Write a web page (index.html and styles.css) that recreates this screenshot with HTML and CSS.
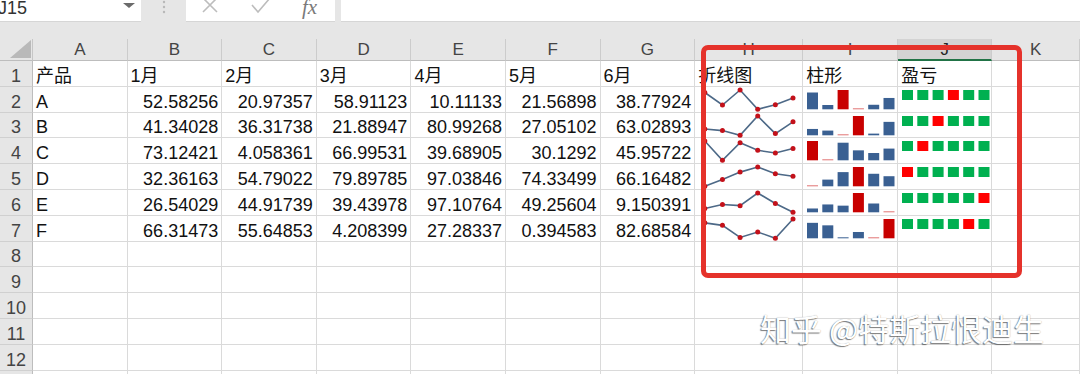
FILE: index.html
```html
<!DOCTYPE html>
<html lang="zh-CN">

<head>
    <meta charset="UTF-8">
    <meta name="viewport" content="width=device-width, initial-scale=1.0">
    <title>迷你图</title>
    <link rel="stylesheet" href="styles.css">
</head>

<body>
    <div class="formula-bar">
        <div class="name-box">
            <span class="name">J15</span>
            <span class="drop"></span>
        </div>
        <div class="grip">
            <svg width="4" height="14" viewBox="0 0 4 14"><circle cx="2" cy="2" r="1.2" /><circle cx="2" cy="7" r="1.2" /><circle cx="2" cy="12" r="1.2" /></svg>
        </div>
        <div class="func-box">
            <svg class="icon" width="18" height="18" viewBox="0 0 18 18">
                <path d="M2 -2 L16 12 M16 -2 L2 12" />
            </svg>
            <svg class="icon" width="22" height="18" viewBox="0 0 22 18">
                <path d="M2 5 L8 12 L20 -2" />
            </svg>
            <span class="fx">fx</span>
        </div>
        <div class="input-box"></div>
    </div>

    <div class="sheet">
        <div class="corner"><svg width="22" height="18" viewBox="0 0 22 18"><path d="M21 0 L21 18 L0 18 Z" /></svg></div>
        <div class="col-head">A</div>
        <div class="col-head">B</div>
        <div class="col-head">C</div>
        <div class="col-head">D</div>
        <div class="col-head">E</div>
        <div class="col-head">F</div>
        <div class="col-head">G</div>
        <div class="col-head">H</div>
        <div class="col-head">I</div>
        <div class="col-head active">J</div>
        <div class="col-head">K</div>

        <div class="row">
            <div class="row-head">1</div>
            <div class="cell">产品</div>
            <div class="cell">1月</div>
            <div class="cell">2月</div>
            <div class="cell">3月</div>
            <div class="cell">4月</div>
            <div class="cell">5月</div>
            <div class="cell">6月</div>
            <div class="cell">折线图</div>
            <div class="cell">柱形</div>
            <div class="cell">盈亏</div>
            <div class="cell"></div>
        </div>

        <div class="row data">
            <div class="row-head">2</div>
            <div class="cell">A</div>
            <div class="cell num">52.58256</div>
            <div class="cell num">20.97357</div>
            <div class="cell num">58.91123</div>
            <div class="cell num">10.11133</div>
            <div class="cell num">21.56898</div>
            <div class="cell num">38.77924</div>
            <div class="cell spark line"></div>
            <div class="cell spark column"></div>
            <div class="cell spark winloss"></div>
            <div class="cell"></div>
        </div>

        <div class="row data">
            <div class="row-head">3</div>
            <div class="cell">B</div>
            <div class="cell num">41.34028</div>
            <div class="cell num">36.31738</div>
            <div class="cell num">21.88947</div>
            <div class="cell num">80.99268</div>
            <div class="cell num">27.05102</div>
            <div class="cell num">63.02893</div>
            <div class="cell spark line"></div>
            <div class="cell spark column"></div>
            <div class="cell spark winloss"></div>
            <div class="cell"></div>
        </div>

        <div class="row data">
            <div class="row-head">4</div>
            <div class="cell">C</div>
            <div class="cell num">73.12421</div>
            <div class="cell num">4.058361</div>
            <div class="cell num">66.99531</div>
            <div class="cell num">39.68905</div>
            <div class="cell num">30.1292</div>
            <div class="cell num">45.95722</div>
            <div class="cell spark line"></div>
            <div class="cell spark column"></div>
            <div class="cell spark winloss"></div>
            <div class="cell"></div>
        </div>

        <div class="row data">
            <div class="row-head">5</div>
            <div class="cell">D</div>
            <div class="cell num">32.36163</div>
            <div class="cell num">54.79022</div>
            <div class="cell num">79.89785</div>
            <div class="cell num">97.03846</div>
            <div class="cell num">74.33499</div>
            <div class="cell num">66.16482</div>
            <div class="cell spark line"></div>
            <div class="cell spark column"></div>
            <div class="cell spark winloss"></div>
            <div class="cell"></div>
        </div>

        <div class="row data">
            <div class="row-head">6</div>
            <div class="cell">E</div>
            <div class="cell num">26.54029</div>
            <div class="cell num">44.91739</div>
            <div class="cell num">39.43978</div>
            <div class="cell num">97.10764</div>
            <div class="cell num">49.25604</div>
            <div class="cell num">9.150391</div>
            <div class="cell spark line"></div>
            <div class="cell spark column"></div>
            <div class="cell spark winloss"></div>
            <div class="cell"></div>
        </div>

        <div class="row data">
            <div class="row-head">7</div>
            <div class="cell">F</div>
            <div class="cell num">66.31473</div>
            <div class="cell num">55.64853</div>
            <div class="cell num">4.208399</div>
            <div class="cell num">27.28337</div>
            <div class="cell num">0.394583</div>
            <div class="cell num">82.68584</div>
            <div class="cell spark line"></div>
            <div class="cell spark column"></div>
            <div class="cell spark winloss"></div>
            <div class="cell"></div>
        </div>

        <div class="row empty"><div class="row-head">8</div></div>
        <div class="row empty"><div class="row-head">9</div></div>
        <div class="row empty"><div class="row-head">10</div></div>
        <div class="row empty"><div class="row-head">11</div></div>
        <div class="row empty"><div class="row-head">12</div></div>
        <div class="row empty"><div class="row-head"></div></div>

        <div class="highlight"></div>
        <div class="watermark">知乎 @特斯拉恨迪生</div>
    </div>

    <script>
        var NS = 'http://www.w3.org/2000/svg';

        // fill the empty rows with blank cells
        document.querySelectorAll('.row.empty').forEach(row => {
            for (var i = 0; i < 11; i++) {
                var c = document.createElement('div');
                c.className = 'cell';
                row.appendChild(c);
            }
        });

        var svgFor = cell => {
            var w = cell.clientWidth;
            var h = cell.clientHeight;
            var svg = document.createElementNS(NS, 'svg');
            svg.setAttribute('width', w);
            svg.setAttribute('height', h);
            svg.setAttribute('viewBox', '0 0 ' + w + ' ' + h);
            cell.appendChild(svg);
            return svg;
        };

        var add = (svg, tag, attrs) => {
            var el = document.createElementNS(NS, tag);
            for (var k in attrs) el.setAttribute(k, attrs[k]);
            svg.appendChild(el);
            return el;
        };

        var drawLine = (cell, values, min, max) => {
            var svg = svgFor(cell);
            var pts = values.map((v, i) => [9.8 + i * 17.64, 3 + (max - v) / (max - min) * 19.3]);
            add(svg, 'polyline', {
                points: pts.map(p => p.join(',')).join(' '),
                fill: 'none', stroke: '#4d6987', 'stroke-width': 1.6
            });
            pts.forEach(p => add(svg, 'circle', { cx: p[0], cy: p[1], r: 2.5, fill: '#c3111a' }));
        };

        var drawColumn = (cell, values, min, max) => {
            var svg = svgFor(cell);
            values.forEach((v, i) => {
                var bh = Math.max(1, (v - min) / (max - min) * 19.3);
                var red = v === min || v === max;
                add(svg, 'rect', {
                    x: 4 + i * 15.3, y: 22.3 - bh, width: 11, height: bh,
                    fill: red ? '#c80000' : '#3a6092',
                    opacity: v === min ? 0.55 : 1
                });
            });
        };

        var drawWinLoss = (cell, values, min) => {
            var svg = svgFor(cell);
            values.forEach((v, i) => {
                add(svg, 'rect', {
                    x: 4 + i * 15.3, y: 3, width: 11, height: 10,
                    fill: v === min ? '#ff0000' : '#00b050'
                });
            });
        };

        document.querySelectorAll('.row.data').forEach(row => {
            var values = [...row.querySelectorAll('.num')].map(c => parseFloat(c.textContent));
            var min = Math.min(...values);
            var max = Math.max(...values);
            drawLine(row.querySelector('.line'), values, min, max);
            drawColumn(row.querySelector('.column'), values, min, max);
            drawWinLoss(row.querySelector('.winloss'), values, min);
        });
    </script>
</body>

</html>
```

FILE: styles.css
```css
body {
    margin: 0;
    background-color: #ffffff;
    font-family: "Liberation Sans", "Noto Sans CJK SC", sans-serif;
    overflow: hidden;
    height: 374px;
}

.formula-bar {
    display: flex;
    height: 39px;
    background-color: #e6e6e6;
}

.name-box,
.func-box,
.input-box {
    height: 22px;
    background-color: #ffffff;
    border-bottom: 1px solid #d6d6d6;
    box-sizing: border-box;
}

.name-box {
    width: 141px;
    display: flex;
    justify-content: space-between;
    overflow: hidden;
}

.name-box .name {
    margin-left: -2px;
    font-size: 18px;
    line-height: 16px;
    color: #333333;
}

.name-box .drop {
    width: 0;
    height: 0;
    margin: 3px 6px 0 0;
    border-left: 6px solid transparent;
    border-right: 6px solid transparent;
    border-top: 5px solid #6b6b6b;
}

.grip {
    width: 45px;
    display: flex;
    justify-content: center;
}

.grip svg {
    fill: #b8b8b8;
}

.func-box {
    width: 149px;
    display: flex;
    align-items: flex-start;
}

.func-box .icon {
    fill: none;
    stroke: #bdbdbd;
    stroke-width: 1.6;
}

.func-box .icon:first-child {
    margin-left: 15px;
}

.func-box .icon:nth-child(2) {
    margin-left: 31px;
}

.func-box .fx {
    margin-left: 30px;
    font-family: "Liberation Serif", serif;
    font-style: italic;
    font-size: 21px;
    line-height: 14px;
    color: #7a7a7a;
}

.input-box {
    flex: 1;
    margin-left: 6px;
}

.sheet {
    display: grid;
    grid-template-columns: 33px repeat(7, 94.6px) 108px 95px 94px 1fr;
    grid-template-rows: 22px repeat(13, 25.8px);
    position: relative;
}

.row {
    display: contents;
}

.corner {
    background-color: #e6e6e6;
    border-right: 1px solid #c6c6c6;
    border-bottom: 1px solid #bdbdbd;
    padding: 1px 0 0 10px;
    box-sizing: border-box;
}

.corner svg {
    fill: #b9b9b9;
}

.col-head,
.row-head {
    background-color: #e6e6e6;
    color: #444444;
    box-sizing: border-box;
    display: flex;
    justify-content: center;
    align-items: flex-end;
}

.col-head {
    font-size: 17px;
    line-height: 18px;
    padding-bottom: 1px;
    border-right: 1px solid #cccccc;
    border-bottom: 1px solid #bdbdbd;
}

.col-head.active {
    background-color: #d3d3d3;
    color: #262626;
    border-bottom: 2px solid #217346;
    padding-bottom: 0;
}

.row-head {
    font-size: 18px;
    line-height: 20px;
    border-right: 1px solid #bdbdbd;
    border-bottom: 1px solid #d0d0d0;
}

.cell {
    border-right: 1px solid #dadada;
    border-bottom: 1px solid #dadada;
    box-sizing: border-box;
    padding: 0 3px;
    font-size: 18px;
    line-height: 20px;
    color: #111111;
    white-space: nowrap;
    overflow: hidden;
    display: flex;
    align-items: flex-end;
}

.cell.num {
    justify-content: flex-end;
}

.cell.spark {
    padding: 0;
    align-items: flex-start;
    overflow: visible;
}

.cell.spark svg {
    display: block;
}

.highlight {
    position: absolute;
    left: 701px;
    top: 6px;
    width: 321px;
    height: 233px;
    box-sizing: border-box;
    border: 5px solid #e5322b;
    border-radius: 7px;
}

.watermark {
    position: absolute;
    left: 760px;
    top: 272px;
    font-family: "Noto Sans CJK SC", sans-serif;
    font-size: 31px;
    line-height: 34px;
    color: #ffffff;
    text-shadow: -1px 1px 1px rgba(0, 0, 0, 0.5), 0 0 1px rgba(0, 0, 0, 0.35);
    white-space: nowrap;
}
```
